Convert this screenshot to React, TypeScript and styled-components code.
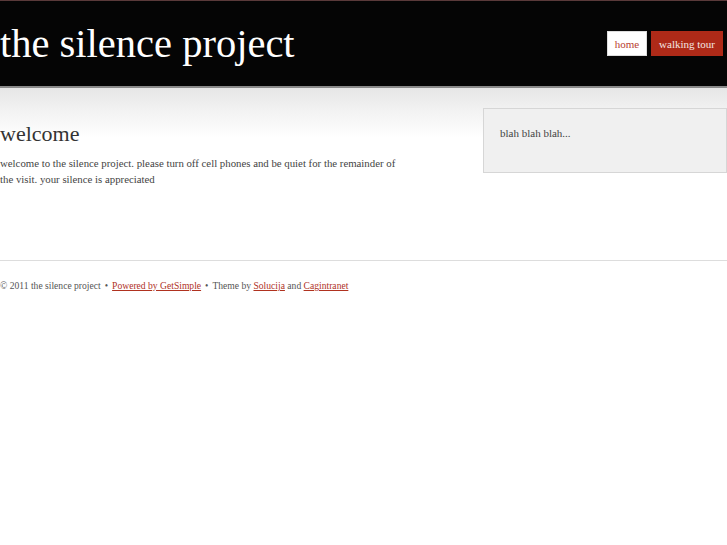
import React from "react";
import styled, { createGlobalStyle } from "styled-components";

const GlobalStyle = createGlobalStyle`
  html, body {
    margin: 0;
    padding: 0;
    background: #ffffff;
    font-family: "Liberation Serif", "Times New Roman", serif;
    color: #333333;
  }
`;

const Header = styled.header`
  height: 88px;
  background: #050505;
  border-top: 1px solid #5a3a3a;
  border-bottom: 2px solid #8a8a8a;
  display: flex;
  align-items: flex-start;
  justify-content: space-between;
  box-sizing: border-box;
`;

const SiteTitle = styled.h1`
  margin: 0;
  padding-top: 21px;
  font-size: 40.5px;
  font-weight: normal;
  line-height: 44px;
  color: #ffffff;
`;

const Nav = styled.nav`
  display: flex;
  gap: 4px;
  padding-top: 30px;
  padding-right: 4px;
`;

const NavLink = styled.a<{ $active?: boolean }>`
  display: block;
  height: 25px;
  line-height: 24px;
  padding: 0 7px;
  font-size: 11px;
  text-decoration: none;
  box-sizing: border-box;
  background: ${(p) => (p.$active ? "#ffffff" : "#ae2a18")};
  color: ${(p) => (p.$active ? "#b8402f" : "#f4e6e2")};
  border: 1px solid ${(p) => (p.$active ? "#dddddd" : "#ae2a18")};
`;

const Band = styled.div`
  background: linear-gradient(#e6e6e6 0px, #f3f3f3 24px, #ffffff 50px);
`;

const Content = styled.div`
  display: flex;
  justify-content: space-between;
  padding-top: 20px;
  height: 173px;
  box-sizing: border-box;
`;

const Main = styled.main`
  width: 410px;
  padding-top: 13px;
`;

const Heading = styled.h2`
  margin: 0 0 8px;
  font-size: 22px;
  font-weight: normal;
  line-height: 26px;
  color: #333333;
`;

const Text = styled.p`
  margin: 0;
  font-size: 10.8px;
  line-height: 16px;
  color: #444444;
`;

const Sidebar = styled.aside`
  width: 244px;
  height: 65px;
  box-sizing: border-box;
  background: #f0f0f0;
  border: 1px solid #d6d6d6;
  padding: 16px 16px;
  font-size: 11px;
  line-height: 16px;
  color: #444444;
`;

const Footer = styled.footer`
  border-top: 1px solid #dddddd;
  margin-top: -1px;
  padding-top: 18px;
  font-size: 9.6px;
  line-height: 14px;
  color: #555555;
`;

const FooterLink = styled.a`
  color: #b0321f;
  text-decoration: underline;
`;

const Sep = styled.span`
  margin: 0 4px;
`;

export default function App() {
  return (
    <>
      <GlobalStyle />
      <Header>
        <SiteTitle>the silence project</SiteTitle>
        <Nav>
          <NavLink $active href="#">home</NavLink>
          <NavLink href="#">walking tour</NavLink>
        </Nav>
      </Header>
      <Band>
        <Content>
          <Main>
            <Heading>welcome</Heading>
            <Text>
              welcome to the silence project. please turn off cell phones and be
              quiet for the remainder of the visit. your silence is appreciated
            </Text>
          </Main>
          <Sidebar>blah blah blah...</Sidebar>
        </Content>
      </Band>
      <Footer>
        © 2011 the silence project<Sep>•</Sep>
        <FooterLink href="#">Powered by GetSimple</FooterLink>
        <Sep>•</Sep>Theme by <FooterLink href="#">Solucija</FooterLink> and{" "}
        <FooterLink href="#">Cagintranet</FooterLink>
      </Footer>
    </>
  );
}
